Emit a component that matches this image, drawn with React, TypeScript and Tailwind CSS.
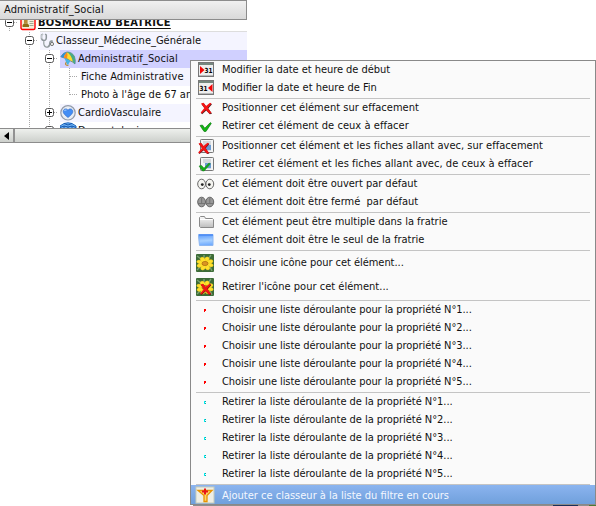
import type { ReactNode } from "react";

type GuideKind = "pass" | "leaf" | "lastLeaf" | "minus" | "plus" | "blank";

function Guide({ kind }: { kind: GuideKind }) {
  const box = kind === "minus" || kind === "plus";
  const dots = { stroke: "#a9a9a9", strokeDasharray: "1 1" };
  return (
    <svg width="20" height="18" className="shrink-0" shapeRendering="crispEdges">
      {kind !== "blank" && <path d={kind === "lastLeaf" ? "M9.5 0V9" : "M9.5 0V18"} {...dots} />}
      {kind !== "pass" && kind !== "blank" && <path d="M10 8.5H18" {...dots} />}
      {box && (
        <g shapeRendering="auto">
          <rect x="5.5" y="4.5" width="8" height="8" rx="2" fill="#fff" stroke="#555" />
          <path d={kind === "plus" ? "M7 8.5h5M9.5 6v5" : "M7 8.5h5"} stroke="#000" />
        </g>
      )}
    </svg>
  );
}

const Stethoscope = () => (
  <svg width="16" height="18" viewBox="0 0 16 18" fill="none" className="shrink-0">
    <path d="M3 2L1.5 3.2V6.5Q2 8.5 4 8.5T6.3 6V3L5.2 2M4 8.5V12Q4.5 15.5 7.5 15Q10 14.5 9.8 11Q10 8.5 12 9V11.5" stroke="#8d959a" strokeWidth="1.5" />
    <path d="M3 2L1.5 3.2V6.5M4.5 9V12Q5 14.5 7.5 14.3" stroke="#e4e9ec" strokeWidth=".6" />
    <circle cx="12" cy="12" r="1.6" fill="#eee" stroke="#777" />
  </svg>
);

const Umbrella = () => (
  <svg width="18" height="18" viewBox="0 0 18 18" className="shrink-0">
    <path d="M8.5 7L5.5 14Q6.5 16 8.5 15" stroke="#b98a2c" strokeWidth="1.2" fill="none" />
    <path d="M.8 6.8Q3 2.5 7 2Q12 2 14.4 6.5Q15.8 10.5 15 14Q12.8 11.8 10.5 11L7 8.8L3.8 7.8Z" fill="#ffdc2e" stroke="#3c6f96" strokeWidth=".7" />
    <path d="M.8 6.8Q3 2.5 7 2Q4.6 4.4 3.8 7.8Z" fill="#2f8fdc" />
    <path d="M7 2Q4.6 4.4 3.8 7.8L7 8.8Q8 5 7 2" fill="#f58a20" />
    <path d="M7 2Q12 2 14.4 6.5Q15.8 10.5 15 14L12.8 12Q12 5.5 7 2" fill="#49a98a" />
    <path d="M4.3 8.2L7 9L10.2 11.2L7.8 15.2Z" fill="#46b4e4" />
  </svg>
);

const Heart = () => (
  <svg width="18" height="18" viewBox="0 0 18 18" className="shrink-0">
    <circle cx="8" cy="8.8" r="7.2" fill="#e8edf5" stroke="#929baa" strokeWidth="1.2" />
    <path d="M8 13.5C5 11 3 9.5 3.2 7.2C3.5 4.5 7 4.2 8 6.3C9 4.2 12.5 4.5 12.8 7.2C13 9.5 11 11 8 13.5" fill="#438df5" stroke="#326dcc" strokeWidth=".7" />
    <path d="M4.5 7Q5 5.5 6.5 6" stroke="#a9d1ff" fill="none" />
  </svg>
);

const Globe = () => (
  <svg width="18" height="18" viewBox="0 0 18 18" className="shrink-0">
    <path d="M0 4L4 1.5L8 .8L12 1.5L16 4V14H0Z" fill="#72b5f5" stroke="#1e66bd" />
    <path d="M0 5.5L4 4L8 5L12 4L16 5.5M4 1.5L8 3L12 1.5M4 4V14M8 5V14M12 4V14" stroke="#1557b0" fill="none" />
  </svg>
);

const Person = () => (
  <svg width="18" height="18" viewBox="0 0 18 18" className="shrink-0">
    <rect x="1" y="1" width="14" height="14.5" rx="1.5" fill="#f4efd9" stroke="#f00" strokeWidth="1.4" />
    <rect x="4" y="4" width="3.6" height="5.5" fill="#b98a35" />
    <path d="M2.5 13V11L4 9.5H7.5L9 11V13Z" fill="#8e6c15" />
    <path d="M9.5 7.5h4M9.5 9.5h4M9.5 11.5h4" stroke="#a3aa93" />
  </svg>
);

interface NodeProps {
  guides: GuideKind[];
  icon?: ReactNode;
  label: string;
  tone?: string;
  bold?: boolean;
  spacing?: string;
}

function TreeRow({ guides, icon, label, tone = "", bold, spacing = "" }: NodeProps) {
  return (
    <div className="flex h-[18px] shrink-0">
      {guides.map((g, i) => <Guide key={i} kind={g} />)}
      <div className={`flex min-w-0 flex-1 items-center whitespace-nowrap ${tone}`}>
        {icon}
        <span className={`leading-[18px] ${bold ? "font-bold underline underline-offset-2" : ""} ${spacing}`}>{label}</span>
      </div>
    </div>
  );
}

const crossPath = "M1 1.5L3.5 .8L6 4L10 .8L11.5 1.5L7.8 5.8L11.5 11L9.3 11.5L5.8 7.8L1.7 11.5L.7 10.5L4.4 6Z";

const Cross = () => (
  <svg width="20" height="18" viewBox="0 0 20 18">
    <g transform="translate(5 3)"><path d={crossPath} transform="translate(.5 .7)" fill="#582020" /><path d={crossPath} fill="#f41414" /></g>
  </svg>
);

const Check = () => (
  <svg width="20" height="18" viewBox="0 0 20 18">
    <path d="M5 8.5L7.4 8L9.8 11.2L15.3 5.6L16.3 6.4L11 14.4H9Z" fill="#11b811" stroke="#16771b" strokeWidth=".7" />
  </svg>
);

const Calendar = ({ end }: { end?: boolean }) => (
  <svg width="20" height="18" viewBox="0 0 20 18">
    <rect x="3.5" y="1.5" width="15" height="14" fill="#eee" stroke="#777" />
    <path d="M4 3h14" stroke="#75877e" strokeWidth="2" />
    <path d="M4 14.5h14" stroke="#bbb" />
    <path d={end ? "M17.5 5V13L13 9Z" : "M5 5V13L9.5 9Z"} fill="#f10505" />
    <text x={end ? 4.6 : 9.6} y="11.6" fontFamily="DejaVu Sans" fontWeight="700" fontSize="7" textLength="8" lengthAdjust="spacingAndGlyphs">31</text>
  </svg>
);

const Page = ({ remove }: { remove?: boolean }) => (
  <svg width="20" height="18" viewBox="0 0 20 18">
    <rect x="5.5" y="2.5" width="13" height="13" rx=".8" fill="#f3f4f5" stroke="#777" />
    <path d="M8 5h8M8 7h8M8 13h8" stroke="#b9bfc4" />
    <path d="M10 8h6v5h-6Z" fill="#6b9bd2" />
    {remove ? (
      <path d="M4 11L6.6 10.5L9 13.2L14 8L15.3 8.8L9.2 16H7.5Z" fill="#15ae18" stroke="#137b18" strokeWidth=".5" />
    ) : (
      <g transform="translate(2.5 5)"><path d={crossPath} transform="translate(.4 .5)" fill="#612" /><path d={crossPath} fill="#f31414" /></g>
    )}
  </svg>
);

const Eyes = ({ closed }: { closed?: boolean }) => (
  <svg width="20" height="18" viewBox="0 0 20 18" stroke="#666">
    <ellipse cx="6.6" cy="9" rx="3.9" ry="4.8" fill={closed ? "#999" : "#f4f4f0"} />
    <ellipse cx="14.8" cy="9" rx="3.9" ry="4.8" fill={closed ? "#999" : "#f4f4f0"} />
    {closed ? (
      <path d="M3 10.5H10M11.5 10.5H18.3M6.6 5V10M14.8 5V10" fill="none" strokeWidth=".7" />
    ) : (
      <g fill="#222" stroke="none"><circle cx="7.3" cy="9.6" r="1.4" /><circle cx="14.3" cy="9.6" r="1.4" /></g>
    )}
  </svg>
);

const Folder = () => (
  <svg width="20" height="18" viewBox="0 0 20 18">
    <defs><linearGradient id="folderGrey" x2="0" y2="1"><stop stopColor="#fafafa" /><stop offset="1" stopColor="#bdbdbd" /></linearGradient></defs>
    <path d="M4.5 13.5V4.5L5.5 3.5H9.5L10.5 5.5H17.5L18.5 6.5V14.5H5.5Z" fill="url(#folderGrey)" stroke="#898989" />
    <path d="M5 6.5H17.5" stroke="#fff" />
  </svg>
);

const BlueBox = () => (
  <svg width="20" height="18" viewBox="0 0 20 18">
    <defs><linearGradient id="boxBlue" x2=".1" y2="1"><stop stopColor="#5799fc" /><stop offset=".6" stopColor="#a7d0ff" /><stop offset="1" stopColor="#71acff" /></linearGradient></defs>
    <path d="M3.5 3.5H18V14.5H4.5L3.5 5Z" fill="url(#boxBlue)" stroke="#8cb6f1" />
    <path d="M4 4H18" stroke="#4b8af3" strokeWidth="1.5" />
  </svg>
);

const Flower = ({ remove }: { remove?: boolean }) => (
  <svg width="20" height="20" viewBox="0 0 20 20">
    <rect x="1" y="1" width="18" height="18" rx="1" fill="#3c6b37" />
    <path d="M2 3L6 6M16 2L13 6M2 17L5 14M17 18L15 14M9 2V5" stroke="#7ba472" strokeWidth="1.4" />
    <g fill="#ffe12d" stroke="#e2b312" strokeWidth=".3">
      {[20, 65, 110, 155, 200, 245, 290, 335].map((a) => (
        <ellipse key={a} cx="10" cy="5.8" rx="2.4" ry="4" transform={`translate(0 2.1) scale(1 .8) rotate(${a} 10 10.5)`} />
      ))}
    </g>
    <ellipse cx="10" cy="10.5" rx="3" ry="2.1" fill="#d99522" stroke="#a96810" strokeWidth=".7" />
    {remove && <g transform="translate(4.5 6)"><path d={crossPath} transform="translate(.4 .5)" fill="#5e1818" /><path d={crossPath} fill="#f01515" /></g>}
  </svg>
);

const Marker = ({ cyan }: { cyan?: boolean }) => (
  <svg width="20" height="18" viewBox="0 0 20 18" shapeRendering="crispEdges">
    {cyan ? (
      <>
        <rect x="9" y="8" width="1" height="3" fill="#00f0f0" />
        <rect x="10" y="8" width="1" height="1" fill="#10a8a8" />
        <rect x="10" y="10" width="1" height="1" fill="#10a8a8" />
      </>
    ) : (
      <>
        <rect x="9" y="8" width="1" height="3" fill="#ff0000" />
        <rect x="10" y="8" width="1" height="2" fill="#ff0000" />
      </>
    )}
  </svg>
);

const Filter = () => (
  <svg width="20" height="18" viewBox="0 0 20 18">
    <rect x="1" y="1" width="18" height="16" fill="#eeeee4" stroke="#c5cbbb" />
    <path d="M3 4.5H17L12 9.5V15.5H9V9.5Z" fill="#ffd56a" stroke="#e89300" strokeWidth="1.3" />
    <path d="M10 2.5V8.5M7 5.5H13" stroke="#e81616" strokeWidth="2" />
  </svg>
);

interface Entry {
  icon: ReactNode;
  label: string;
  tall?: boolean;
  spacing?: string;
}

const groups: Entry[][] = [
  [
    { icon: <Calendar />, label: "Modifier la date et heure de début", spacing: "tracking-[-0.05px]" },
    { icon: <Calendar end />, label: "Modifier la date et heure de Fin" },
  ],
  [
    { icon: <Cross />, label: "Positionner cet élément sur effacement", spacing: "tracking-[0.03px]" },
    { icon: <Check />, label: "Retirer cet élément de ceux à effacer", spacing: "tracking-[0.05px]" },
  ],
  [
    { icon: <Page />, label: "Positionner cet élément et les fiches allant avec, sur effacement", spacing: "tracking-[0.03px]" },
    { icon: <Page remove />, label: "Retirer cet élément et les fiches allant avec, de ceux à effacer", spacing: "tracking-[0.04px]" },
  ],
  [
    { icon: <Eyes />, label: "Cet élément doit être ouvert par défaut", spacing: "tracking-[-0.02px]" },
    { icon: <Eyes closed />, label: "Cet élément doit être fermé  par défaut" },
  ],
  [
    { icon: <Folder />, label: "Cet élément peut être multiple dans la fratrie" },
    { icon: <BlueBox />, label: "Cet élément doit être le seul de la fratrie" },
  ],
  [
    { icon: <Flower />, label: "Choisir une icône pour cet élément...", tall: true, spacing: "tracking-[-0.04px]" },
    { icon: <Flower remove />, label: "Retirer l'icône pour cet élément...", tall: true, spacing: "tracking-[0.02px]" },
  ],
  [1, 2, 3, 4, 5].map((n) => ({ icon: <Marker />, label: `Choisir une liste déroulante pour la propriété N°${n}...`, spacing: "tracking-[-0.075px]" })),
  [1, 2, 3, 4, 5].map((n) => ({ icon: <Marker cyan />, label: `Retirer la liste déroulante de la propriété N°${n}...`, spacing: "tracking-[-0.04px]" })),
];

function ContextMenu() {
  return (
    <div className="absolute left-[190px] top-[60px] h-[445px] w-[406px] border border-[#898989] bg-[#fafafa] shadow-[3px_1px_0_#8e8e8e]">
      {groups.map((group, i) => (
        <div key={i}>
          {group.map((e) => (
            <div key={e.label} className={`flex items-center pl-[4px] ${e.tall ? "h-6" : "h-[18px]"}`}>
              {e.icon}
              <span className={`ml-[7px] whitespace-pre leading-[18px] ${e.spacing ?? ""}`}>{e.label}</span>
            </div>
          ))}
          <div className="mx-[5px] h-[2px] border-b border-[#c4c4c4]" />
        </div>
      ))}
      <div className="flex h-[19px] items-center bg-linear-to-b from-[#8bb4ef] to-[#70a0dc] pl-[4px] text-[#f4f8ff]">
        <Filter />
        <span className="ml-[7px] whitespace-pre pt-[2px] leading-[17px]">Ajouter ce classeur à la liste du filtre en cours</span>
      </div>
    </div>
  );
}

export default function App() {
  return (
    <div className="relative h-[506px] w-[596px] overflow-hidden bg-white text-[11px] text-[#111] [font-family:'DejaVu_Sans_Condensed','DejaVu_Sans',sans-serif] [font-stretch:condensed]">
      <div className="flex h-[143px] w-[247px] flex-col">
        <div className="flex h-5 w-[247px] shrink-0 items-center border-y border-r border-[#8c8c8c] bg-linear-to-b from-[#f0f0f0] to-[#d9d9d9] pl-[4px] tracking-[0.1px]">
          Administratif_Social
        </div>
        <div className="h-[108px] overflow-hidden">
          <div className="-mt-[6px] flex flex-col">
            <TreeRow guides={["minus"]} icon={<Person />} label="BOSMOREAU BEATRICE" bold spacing="tracking-[0.28px]" />
            <TreeRow guides={["blank", "minus"]} icon={<Stethoscope />} label="Classeur_Médecine_Générale" tone="bg-[#f4f4ff] shadow-[0_-1px_0_#ddd]" />
            <TreeRow guides={["blank", "pass", "minus"]} icon={<Umbrella />} label="Administratif_Social" tone="bg-[#d0d0ff]" spacing="tracking-[0.1px]" />
            <TreeRow guides={["blank", "pass", "pass", "leaf"]} label="Fiche Administrative" tone="bg-[#f4f4ff] pl-[1px]" spacing="tracking-[0.1px]" />
            <TreeRow guides={["blank", "pass", "pass", "lastLeaf"]} label="Photo à l'âge de 67 ans" tone="pl-[1px]" />
            <TreeRow guides={["blank", "pass", "plus"]} icon={<Heart />} label="CardioVasculaire" tone="bg-[#f4f4ff]" spacing="tracking-[0.06px]" />
            <TreeRow guides={["blank", "pass", "plus"]} icon={<Globe />} label="Dermatologie" />
          </div>
        </div>
        <div className="flex h-[15px] shrink-0 border-y border-[#8c8c8c] bg-linear-to-b from-[#eef0ed] to-[#cdd0cc]">
          <div className="flex w-[15px] items-center justify-center border-r-2 border-[#929292]">
            <svg width="5" height="8"><path d="M5 0V8L0 4Z" fill="#000" /></svg>
          </div>
        </div>
      </div>
      <ContextMenu />
      <div className="absolute bottom-0 left-[553px] h-px w-[25px] bg-[#1c2f57]" />
      <div className="absolute bottom-0 left-[589px] h-px w-[7px] bg-[#4a7a35]" />
    </div>
  );
}
